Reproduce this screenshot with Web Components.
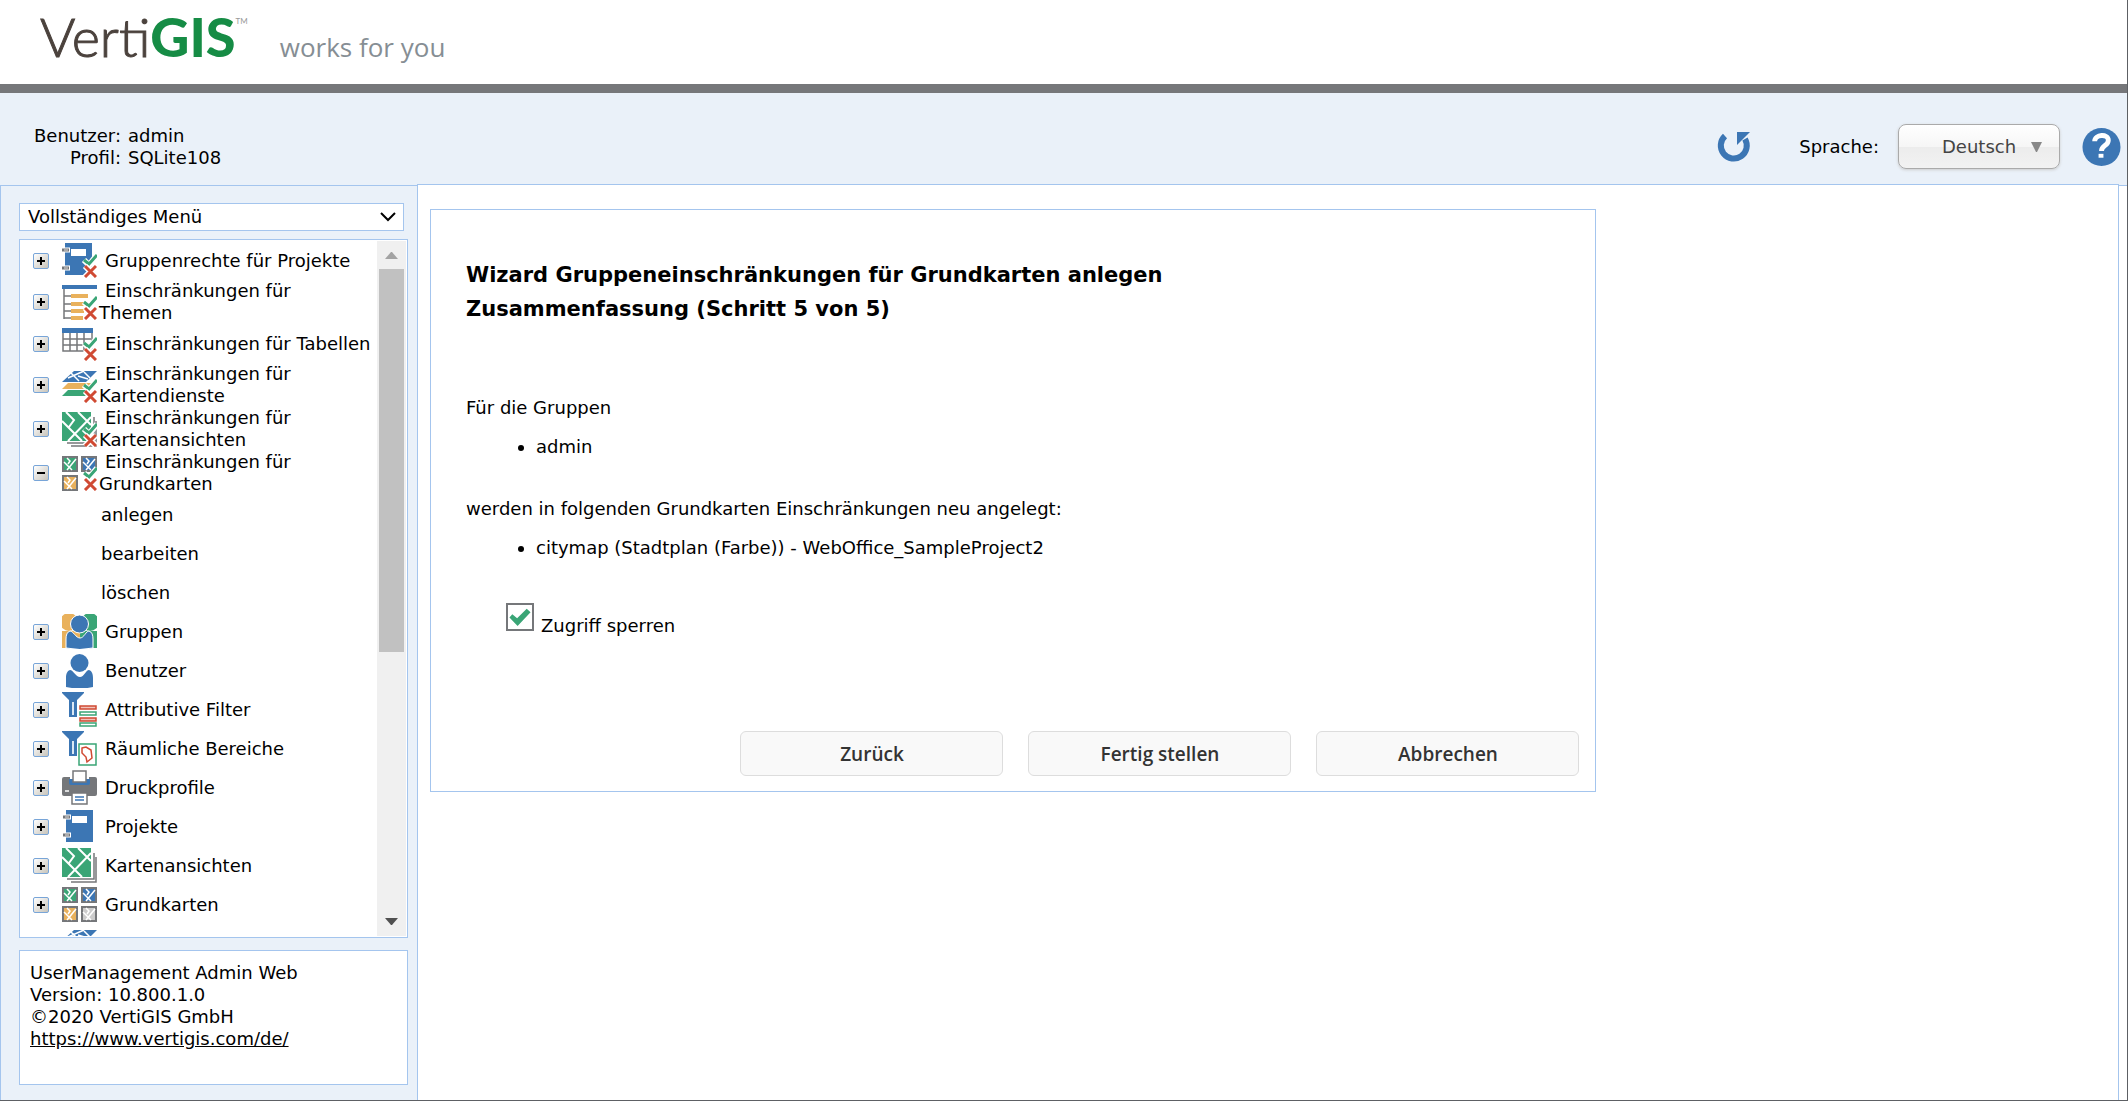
<!DOCTYPE html>
<html lang="de">
<head>
<meta charset="utf-8">
<title>UserManagement Admin Web</title>
<style>
html, body {
  margin: 0;
  height: 100%;
}

body {
  font: 18px/22px "DejaVu Sans", Verdana, sans-serif;
  color: #000;
  background: #fff;
}
</style>
</head>
<body>

<admin-app>
  <brand-header slot="header"></brand-header>
  <user-bar slot="bar" user="admin" profile="SQLite108"></user-bar>

  <menu-select slot="side"></menu-select>
  <menu-tree slot="side">
    <tree-item icon="groupRights">Gruppenrechte für Projekte</tree-item>
    <tree-item icon="themes">Einschränkungen für<br>Themen</tree-item>
    <tree-item icon="tables">Einschränkungen für Tabellen</tree-item>
    <tree-item icon="services">Einschränkungen für<br>Kartendienste</tree-item>
    <tree-item icon="viewsRestricted">Einschränkungen für<br>Kartenansichten</tree-item>
    <tree-item icon="basemapsRestricted" open>Einschränkungen für<br>Grundkarten
      <tree-link slot="children">anlegen</tree-link>
      <tree-link slot="children">bearbeiten</tree-link>
      <tree-link slot="children">löschen</tree-link>
    </tree-item>
    <tree-item icon="groups">Gruppen</tree-item>
    <tree-item icon="user">Benutzer</tree-item>
    <tree-item icon="attributeFilter">Attributive Filter</tree-item>
    <tree-item icon="spatialFilter">Räumliche Bereiche</tree-item>
    <tree-item icon="print">Druckprofile</tree-item>
    <tree-item icon="project">Projekte</tree-item>
    <tree-item icon="views">Kartenansichten</tree-item>
    <tree-item icon="basemaps">Grundkarten</tree-item>
    <tree-item icon="layers"></tree-item>
  </menu-tree>
  <version-box slot="side">
    UserManagement Admin Web<br>
    Version: 10.800.1.0<br>
    ©2020 VertiGIS GmbH<br>
    <a href="https://www.vertigis.com/de/">https://www.vertigis.com/de/</a>
  </version-box>

  <wizard-panel>
    <span slot="title">Wizard Gruppeneinschränkungen für Grundkarten anlegen</span>
    <span slot="step">Zusammenfassung (Schritt 5 von 5)</span>
    <summary-list>
      <span slot="intro">Für die Gruppen</span>
      admin
    </summary-list>
    <summary-list>
      <span slot="intro">werden in folgenden Grundkarten Einschränkungen neu angelegt:</span>
      citymap (Stadtplan (Farbe)) - WebOffice_SampleProject2
    </summary-list>
    <check-field>Zugriff sperren</check-field>
    <wizard-button slot="actions">Zurück</wizard-button>
    <wizard-button slot="actions">Fertig stellen</wizard-button>
    <wizard-button slot="actions">Abbrechen</wizard-button>
  </wizard-panel>
</admin-app>

<script>
const BLUE = '#3c76b4'
const GREEN = '#3aa576'
const ORANGE = '#e9b15c'
const RED = '#d04a33'
const GRAY = '#75777a'

// tick and cross in the lower right corner of the restriction icons
const marks = `
<path d="M22 17l5 5 8-10" fill="none" stroke="#fff" stroke-width="6"/>
<path d="M22 17l5 4 8-9" fill="none" stroke="${GREEN}" stroke-width="3"/>
<path d="M23 23l11 11M34 23l-11 11" stroke="#fff" stroke-width="6"/>
<path d="M23 23l11 11M34 23l-11 11" stroke="${RED}" stroke-width="3"/>`

const tile = (x, y, fill) => `
<g transform="translate(${x} ${y})">
  <rect x="1" y="1" width="14" height="14" fill="${fill}" stroke="${GRAY}" stroke-width="2"/>
  <path d="M2 6l8 8M14 3L5 14M5 2l3 3-2 3" fill="none" stroke="#fff" stroke-width="1.5"/>
</g>`

const mapSheet = `
<path d="M32 5v26H5M34 9v25H9" fill="none" stroke="${GRAY}" stroke-width="1.5"/>
<rect width="29" height="29" fill="${GREEN}"/>
<path d="M0 9l20 20M29 5L6 29M4 0l8 8-5 7M16 0l13 13" fill="none" stroke="#fff" stroke-width="2"/>`

const stack = `
<path d="M12 3h23L24 14H0z" fill="${BLUE}"/>
<path d="M9 5l8 8M6 10l16-7M16 8l10 3M22 4l6 6" stroke="#fff" stroke-width="1.5"/>
<path d="M6 15h24l-6 6H0z" fill="${ORANGE}"/>
<path d="M6 22h24l-6 6H0z" fill="${GREEN}"/>`

const notebook = `
<path d="M4 1h27v32H4z" fill="${BLUE}"/>
<path d="M10 7h15v7H10z" fill="#fff"/>
<path d="M1 8h8M1 26h8" stroke="#fff" stroke-width="5"/>
<path d="M1 8h7M1 26h7" stroke="${GRAY}" stroke-width="3"/>
<path d="M3 8h4M3 26h4" stroke="#ddd"/>`

const funnel = `
<path d="M0 0h22v1l-7 7v17H7V8L0 1z" fill="${BLUE}"/>
<path d="M11 10v13" stroke="#dce8f4" stroke-width="2"/>`

const person = `
<path d="M8 17c-3 1-4 4-4 8v9q14 3 27 0v-9c0-4-1-7-4-8-3 0-5 7-9 7s-7-7-10-7z" fill="${BLUE}"/>
<circle cx="17.500" cy="10" r="9" fill="${BLUE}"/>`

const icons = {
  groupRights: `<g transform="translate(-1 -1)">${notebook}</g>${marks}`,
  themes: `
<path d="M2 4v30M2 11h7M2 19h7M2 26h7M2 33h7" fill="none" stroke="${GRAY}" stroke-width="1.5"/>
<path d="M0 0h35v4H0z" fill="${BLUE}"/>
<path d="M9 11h17M9 19h13M9 26h13M9 33h12" stroke="${ORANGE}" stroke-width="4"/>${marks}`,
  tables: `
<path d="M1 7v18h29V7M1 13h28M1 19h28M8 7v18M15 7v18M22 7v18" fill="none" stroke="${GRAY}" stroke-width="1.5"/>
<path d="M0 2h31v5H0z" fill="${BLUE}"/>${marks}`,
  services: stack + marks,
  layers: `<g transform="translate(0 1)">${stack}</g>`,
  viewsRestricted: mapSheet + marks,
  views: mapSheet,
  basemapsRestricted: tile(0, 0, GREEN) + tile(19, 0, BLUE) + tile(0, 19, ORANGE) + marks,
  basemaps: tile(0, 0, GREEN) + tile(19, 0, BLUE) + tile(0, 19, ORANGE) + tile(19, 19, '#ccc'),
  groups: `
<circle cx="7" cy="8" r="9" fill="${ORANGE}"/><path d="M0 17h18v17H0z" fill="${ORANGE}"/>
<circle cx="28" cy="8" r="9" fill="${GREEN}"/><path d="M18 17h17v17H18z" fill="${GREEN}"/>
<g stroke="#fff" stroke-width="1">${person}</g>`,
  user: person,
  attributeFilter: `${funnel}
<g fill="#fff" stroke-width="1.500">
  <path d="M18 14h16v3H18zM18 26h16v3H18z" stroke="${RED}" fill="#f1c2ba"/>
  <path d="M18 20h16v3H18zM18 31h16v3H18z" stroke="${GREEN}"/>
</g>`,
  spatialFilter: `${funnel}
<path d="M17 13h17v21H17z" fill="#fff" stroke="${GREEN}" stroke-width="1.5"/>
<path d="M20 17l4-1 5 3 1 8-5 4-1-5-4-4z" fill="none" stroke="${RED}" stroke-width="1.5"/>`,
  print: `
<path d="M0 9q0-2 2-2h6v7h19V7h6q2 0 2 2v15q0 2-2 2H2q-2 0-2-2z" fill="${GRAY}"/>
<path d="M7 9h21v4q0 2-2 2H9q-2 0-2-2z" fill="${BLUE}"/>
<path d="M11 1h13v11H11z" fill="#fff" stroke="${GRAY}" stroke-width="1.5"/>
<path d="M10 23h15v11H10z" fill="#fff" stroke="${GRAY}" stroke-width="1.5"/>
<path d="M13 27h9M13 30h9" stroke="${BLUE}" stroke-width="1.5"/>
<path d="M3 21h4" stroke="#fff" stroke-width="1.5"/>`,
  project: notebook,
}

class BaseElement extends HTMLElement {
  constructor() {
    super()
    this.attachShadow({ mode: 'open' })
    this.shadowRoot.innerHTML = this.template()
  }
}

class AdminApp extends BaseElement {
  template() {
    return /*html*/ `
<style>
:host {
  display: flex;
  flex-direction: column;
  box-sizing: border-box;
  height: 100vh;
  border: solid #5d6064;
  border-width: 0 1px 1px 0;
}

.body {
  display: flex;
  flex: 1;
  min-height: 0;
  background: #eaf1f9;
}

aside {
  display: flex;
  flex-direction: column;
  box-sizing: border-box;
  flex: 0 0 417px;
  margin-top: 1px;
  padding: 17px 9px 15px 18px;
  border: solid #a4c5ee;
  border-width: 1px 0 0 1px;
}

main {
  flex: 1;
  box-sizing: border-box;
  padding: 24px 12px;
  border: 1px solid #a4c5ee;
  border-bottom: 0;
  background: #fff;
}

.edge {
  flex: 0 0 8px;
  margin-top: 1px;
  border-top: 1px solid #a4c5ee;
  background: #fff;
}
</style>
<slot name="header"></slot>
<slot name="bar"></slot>
<div class="body">
  <aside><slot name="side"></slot></aside>
  <main><slot></slot></main>
  <div class="edge"></div>
</div>`
  }
}
customElements.define('admin-app', AdminApp)

class BrandHeader extends BaseElement {
  template() {
    return /*html*/ `
<style>
:host {
  display: block;
  border-bottom: 9px solid #76777a;
}

header {
  display: flex;
  align-items: baseline;
  box-sizing: border-box;
  height: 84px;
  padding: 5px 40px 0;
  font-family: Lato, sans-serif;
  font-size: 54px;
  line-height: 64px;
}

.verti {
  font-weight: 300;
  color: #4b423d;
  -webkit-text-stroke: 1px #4b423d;
}

.gis {
  font-weight: 900;
  color: #168c45;
}

sup {
  align-self: flex-start;
  margin-top: 8px;
  font-size: 8px;
  line-height: 16px;
  color: #999;
}

.claim {
  margin-left: 32px;
  font-family: "Open Sans", sans-serif;
  font-size: 26px;
  color: #868e94;
}
</style>
<header>
  <span class="verti">Verti</span><span class="gis">GIS</span><sup>TM</sup>
  <span class="claim">works for you</span>
</header>`
  }
}
customElements.define('brand-header', BrandHeader)

class UserBar extends BaseElement {
  template() {
    return /*html*/ `
<style>
:host {
  display: flex;
  align-items: center;
  box-sizing: border-box;
  height: 91px;
  padding: 16px 6px 0 34px;
  background: #eaf1f9;
}

dl {
  display: grid;
  grid-template-columns: auto auto;
  column-gap: 7px;
  margin: 0 auto 0 0;
}

dt {
  text-align: right;
}

dd {
  margin: 0;
}

button {
  display: block;
  padding: 0;
  border: 0;
  background: none;
}

svg {
  display: block;
}

label {
  margin: 0 19px 0 48px;
}

.language {
  display: grid;
  align-items: center;
  margin-right: 22px;
}

.language > * {
  grid-area: 1 / 1;
}

select {
  appearance: none;
  width: 162px;
  height: 45px;
  padding: 0 24px 0 43px;
  border: 1px solid #aaa;
  border-radius: 8px;
  background: linear-gradient(#fff, #f6f6f6 50%, #ececec 51%, #f2f2f2);
  box-shadow: 0 1px 3px #ccc;
  font: inherit;
  color: #444;
}

.arrow {
  justify-self: end;
  margin-right: 18px;
  pointer-events: none;
}
</style>
<dl>
  <dt>Benutzer:</dt><dd id="user"></dd>
  <dt>Profil:</dt><dd id="profile"></dd>
</dl>
<button aria-label="Neu laden">
  <svg width="34" height="34" viewBox="0 0 34 34">
    <path d="M8 6a13 13 0 1 0 20 3" fill="none" stroke="${BLUE}" stroke-width="6"/>
    <path d="M20 2h13L20 15z" fill="${BLUE}"/>
  </svg>
</button>
<label for="language">Sprache:</label>
<div class="language">
  <select id="language"><option>Deutsch</option></select>
  <svg class="arrow" width="11" height="10"><path d="M0 0h11L6 10H5z" fill="#888"/></svg>
</div>
<button aria-label="Hilfe">
  <svg width="39" height="40" viewBox="0 0 40 40">
    <circle cx="20" cy="20" r="19.500" fill="${BLUE}"/>
    <path d="M13 14c0-7 14-8 14-1 0 6-7 5-7 11" fill="none" stroke="#fff" stroke-width="5"/>
    <path d="M17 27h5v4h-5z" fill="#fff"/>
  </svg>
</button>`
  }

  connectedCallback() {
    this.shadowRoot.getElementById('user').textContent = this.getAttribute('user')
    this.shadowRoot.getElementById('profile').textContent = this.getAttribute('profile')
  }
}
customElements.define('user-bar', UserBar)

class MenuSelect extends BaseElement {
  template() {
    return /*html*/ `
<style>
:host {
  display: grid;
  align-items: center;
  margin: 0 4px 8px 0;
}

select, svg {
  grid-area: 1 / 1;
}

select {
  appearance: none;
  height: 28px;
  padding: 0 8px;
  border: 1px solid #a4c5ee;
  border-radius: 0;
  background: #fff;
  font: inherit;
  color: #000;
}

svg {
  justify-self: end;
  margin-right: 8px;
  pointer-events: none;
}
</style>
<select aria-label="Menü"><option>Vollständiges Menü</option></select>
<svg width="16" height="10"><path d="M1 1l7 7 7-7" fill="none" stroke="#000" stroke-width="2"/></svg>`
  }
}
customElements.define('menu-select', MenuSelect)

class MenuTree extends BaseElement {
  template() {
    return /*html*/ `
<style>
:host {
  display: flex;
  flex: 1;
  min-height: 0;
  padding: 1px;
  border: 1px solid #a4c5ee;
  background: #fff;
}

nav {
  flex: 1;
  overflow: hidden;
}

.scroll {
  display: flex;
  flex-direction: column;
  align-items: center;
  box-sizing: border-box;
  width: 29px;
  padding: 11px 0;
  background: #f0f0f0;
}

.track {
  flex: 1;
  margin: 10px 0;
}

.thumb {
  width: 25px;
  height: 60%;
  background: #c1c1c1;
}
</style>
<nav><slot></slot></nav>
<div class="scroll">
  <svg width="13" height="7"><path d="M0 7l6-7h1l6 7z" fill="#a3a3a3"/></svg>
  <div class="track"><div class="thumb"></div></div>
  <svg width="13" height="7"><path d="M0 0h13L7 7H6z" fill="#505050"/></svg>
</div>`
  }
}
customElements.define('menu-tree', MenuTree)

class TreeItem extends BaseElement {
  template() {
    return /*html*/ `
<style>
:host {
  display: block;
}

.row {
  display: flex;
  align-items: center;
  min-height: 39px;
  padding-left: 12px;
}

button {
  flex: none;
  width: 16px;
  height: 16px;
  margin-right: 13px;
  padding: 0;
  border: 1px solid #78a5d8;
  border-radius: 2px;
  background: linear-gradient(135deg, #fff, #c8c4ba);
}

svg {
  display: block;
  flex: none;
}

.label {
  margin-left: 2px;
  text-indent: 6px;
  white-space: nowrap;
}
</style>
<div class="row">
  <button><svg width="14" height="14"><path id="sign" stroke="#000" stroke-width="2"/></svg></button>
  <svg id="icon" width="35" height="35"></svg>
  <div class="label"><slot></slot></div>
</div>
<slot name="children"></slot>`
  }

  connectedCallback() {
    const open = this.hasAttribute('open')
    const button = this.shadowRoot.querySelector('button')
    button.setAttribute('aria-expanded', open)
    this.shadowRoot.getElementById('sign').setAttribute('d', open ? 'M3 7h8' : 'M3 7h8M7 3v8')
    this.shadowRoot.getElementById('icon').innerHTML = icons[this.getAttribute('icon')]
  }
}
customElements.define('tree-item', TreeItem)

class TreeLink extends BaseElement {
  template() {
    return /*html*/ `
<style>
:host {
  display: block;
  padding-left: 80px;
  line-height: 39px;
}

a {
  color: inherit;
  text-decoration: none;
}
</style>
<a href="#"><slot></slot></a>`
  }
}
customElements.define('tree-link', TreeLink)

class VersionBox extends BaseElement {
  template() {
    return /*html*/ `
<style>
:host {
  display: block;
  margin-top: 12px;
  padding: 11px 10px 34px;
  border: 1px solid #a4c5ee;
  background: #fff;
}

::slotted(a) {
  color: #000;
}
</style>
<slot></slot>`
  }
}
customElements.define('version-box', VersionBox)

class WizardPanel extends BaseElement {
  template() {
    return /*html*/ `
<style>
:host {
  display: block;
  box-sizing: border-box;
  width: 69.6%;
  padding: 48px 16px 15px 35px;
  border: 1px solid #a4c5ee;
}

h1 {
  margin: 0 0 71px;
  font-size: 21px;
  line-height: 34px;
}

h1 slot {
  display: block;
}

footer {
  display: flex;
  justify-content: flex-end;
  gap: 25px;
  margin-top: 94px;
}
</style>
<h1><slot name="title"></slot><slot name="step"></slot></h1>
<slot></slot>
<footer><slot name="actions"></slot></footer>`
  }
}
customElements.define('wizard-panel', WizardPanel)

class SummaryList extends BaseElement {
  template() {
    return /*html*/ `
<style>
:host {
  display: block;
  margin-bottom: 40px;
}

ul {
  margin: 17px 0 0;
  padding-left: 70px;
}
</style>
<slot name="intro"></slot>
<ul><li><slot></slot></li></ul>`
  }
}
customElements.define('summary-list', SummaryList)

class CheckField extends BaseElement {
  template() {
    return /*html*/ `
<style>
:host {
  display: flex;
  align-items: flex-end;
  gap: 7px;
  margin-top: 44px;
  padding-left: 40px;
}

input {
  appearance: none;
  width: 28px;
  height: 28px;
  margin: 0 0 6px;
  border: 2px solid #75777a;
  background: #fff;
}

input:checked::before {
  content: "";
  display: block;
  height: 24px;
  background: #3aa576;
  clip-path: polygon(6% 52%, 18% 39%, 38% 55%, 78% 16%, 94% 30%, 40% 88%);
}
</style>
<input type="checkbox" id="check" checked>
<label for="check"><slot></slot></label>`
  }
}
customElements.define('check-field', CheckField)

class WizardButton extends BaseElement {
  template() {
    return /*html*/ `
<style>
:host {
  display: block;
  flex: 0 1 263px;
}

button {
  width: 100%;
  height: 45px;
  border: 1px solid #ddd;
  border-radius: 6px;
  background: #f9f9f9;
  font: 600 19px "Open Sans", sans-serif;
  color: #333;
}
</style>
<button><slot></slot></button>`
  }
}
customElements.define('wizard-button', WizardButton)
</script>
</body>
</html>
